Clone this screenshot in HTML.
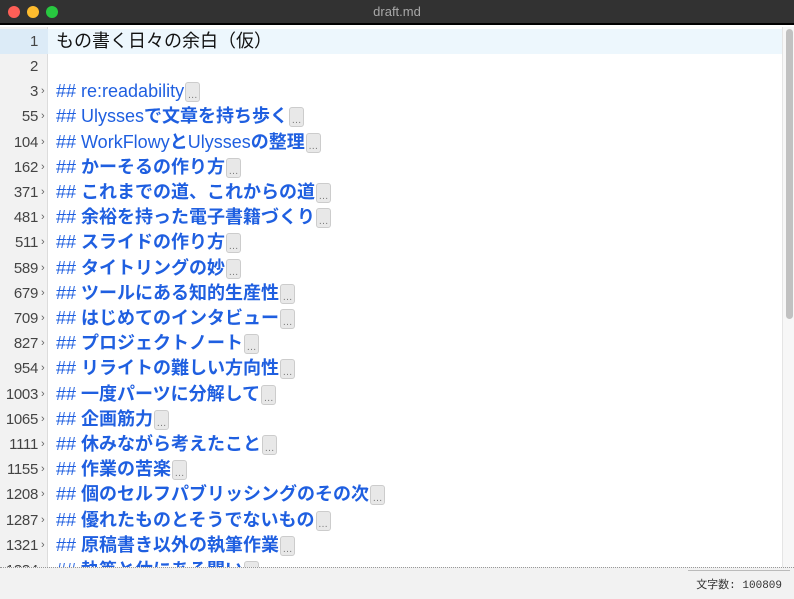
<!DOCTYPE html>
<html><head><meta charset="utf-8"><style>
*{margin:0;padding:0;box-sizing:border-box}
body{width:794px;height:599px;overflow:hidden;background:#fff;font-family:"Liberation Sans","Noto Sans CJK JP",sans-serif;position:relative}
.title{position:absolute;left:0;top:0;width:794px;height:25px;background:#323232;border-bottom:2px solid #000;color:#a8a8a8;font-size:13px;text-align:center;line-height:24px}
.dot{position:absolute;top:6px;width:12px;height:12px;border-radius:50%}
.gut{position:absolute;left:0;top:27px;width:48px;height:540px;background:#f2f2f2;border-right:1px solid #dcdcdc}
.hl{position:absolute;left:0;top:29px;width:782px;height:25px;background:#edf7fd}
.hlg{position:absolute;left:0;top:29px;width:48px;height:25px;background:#dcebf7}
.row{position:absolute;left:0;height:25px;line-height:25px;width:782px;white-space:nowrap}
.n{position:absolute;right:744px;color:#444;font-size:15px;text-align:right;letter-spacing:-0.3px}
.ar{position:absolute;left:41px;color:#666;font-size:11px}
.t{position:absolute;left:56px;font-size:18px;color:#1f5fe0}
.t b{font-weight:bold;font-size:18px}
.c{font-size:18px}
.e{display:inline-block;width:15px;height:20px;vertical-align:middle;background:#e8e8e8;border:1px solid #ccc;border-radius:3px;color:#777;font-size:10px;line-height:25px;text-align:center;margin-left:1px}
.sb{position:absolute;left:782px;top:27px;width:12px;height:540px;background:#f7f7f7;border-left:1px solid #e5e5e5}
.th{position:absolute;left:786px;top:29px;width:7px;height:290px;background:#c1c1c1;border-radius:4px}
.st{position:absolute;left:0;top:567px;width:794px;height:32px;background:#f2f2f2;border-top:1px dotted #999}
.st span{position:absolute;right:12px;top:8px;font-size:11px;color:#333;font-family:"Liberation Mono","Noto Sans CJK JP",monospace}
.st i{position:absolute;left:688px;top:2px;width:102px;height:1px;background:#bbb}
</style></head><body>
<div class="title">draft.md
<div class="dot" style="left:8px;background:#fe5f57"></div>
<div class="dot" style="left:27px;background:#febc2e"></div>
<div class="dot" style="left:46px;background:#28c840"></div></div>
<div class="gut"></div>
<div class="hl"></div><div class="hlg"></div>
<div class="row" style="top:29px"><span class="n">1</span><span class="t c" style="color:#111">もの書く日々の余白（仮）</span></div>
<div class="row" style="top:54px"><span class="n">2</span></div>
<div class="row" style="top:79px"><span class="n">3</span><span class="ar">›</span><span class="t">## re:readability<span class="e">…</span></span></div>
<div class="row" style="top:104px"><span class="n">55</span><span class="ar">›</span><span class="t">## Ulysses<b>で文章を持ち歩く</b><span class="e">…</span></span></div>
<div class="row" style="top:130px"><span class="n">104</span><span class="ar">›</span><span class="t">## WorkFlowy<b>と</b>Ulysses<b>の整理</b><span class="e">…</span></span></div>
<div class="row" style="top:155px"><span class="n">162</span><span class="ar">›</span><span class="t">## <b>かーそるの作り方</b><span class="e">…</span></span></div>
<div class="row" style="top:180px"><span class="n">371</span><span class="ar">›</span><span class="t">## <b>これまでの道、これからの道</b><span class="e">…</span></span></div>
<div class="row" style="top:205px"><span class="n">481</span><span class="ar">›</span><span class="t">## <b>余裕を持った電子書籍づくり</b><span class="e">…</span></span></div>
<div class="row" style="top:230px"><span class="n">511</span><span class="ar">›</span><span class="t">## <b>スライドの作り方</b><span class="e">…</span></span></div>
<div class="row" style="top:256px"><span class="n">589</span><span class="ar">›</span><span class="t">## <b>タイトリングの妙</b><span class="e">…</span></span></div>
<div class="row" style="top:281px"><span class="n">679</span><span class="ar">›</span><span class="t">## <b>ツールにある知的生産性</b><span class="e">…</span></span></div>
<div class="row" style="top:306px"><span class="n">709</span><span class="ar">›</span><span class="t">## <b>はじめてのインタビュー</b><span class="e">…</span></span></div>
<div class="row" style="top:331px"><span class="n">827</span><span class="ar">›</span><span class="t">## <b>プロジェクトノート</b><span class="e">…</span></span></div>
<div class="row" style="top:356px"><span class="n">954</span><span class="ar">›</span><span class="t">## <b>リライトの難しい方向性</b><span class="e">…</span></span></div>
<div class="row" style="top:382px"><span class="n">1003</span><span class="ar">›</span><span class="t">## <b>一度パーツに分解して</b><span class="e">…</span></span></div>
<div class="row" style="top:407px"><span class="n">1065</span><span class="ar">›</span><span class="t">## <b>企画筋力</b><span class="e">…</span></span></div>
<div class="row" style="top:432px"><span class="n">1111</span><span class="ar">›</span><span class="t">## <b>休みながら考えたこと</b><span class="e">…</span></span></div>
<div class="row" style="top:457px"><span class="n">1155</span><span class="ar">›</span><span class="t">## <b>作業の苦楽</b><span class="e">…</span></span></div>
<div class="row" style="top:482px"><span class="n">1208</span><span class="ar">›</span><span class="t">## <b>個のセルフパブリッシングのその次</b><span class="e">…</span></span></div>
<div class="row" style="top:508px"><span class="n">1287</span><span class="ar">›</span><span class="t">## <b>優れたものとそうでないもの</b><span class="e">…</span></span></div>
<div class="row" style="top:533px"><span class="n">1321</span><span class="ar">›</span><span class="t">## <b>原稿書き以外の執筆作業</b><span class="e">…</span></span></div>
<div class="row" style="top:558px;height:9px;overflow:hidden"><span class="n">1334</span><span class="ar">›</span><span class="t">## <b>執筆と休にある関い</b><span class="e">…</span></span></div>
<div class="sb"></div><div class="th"></div>
<div class="st"><i></i><span>文字数: 100809</span></div>
</body></html>
